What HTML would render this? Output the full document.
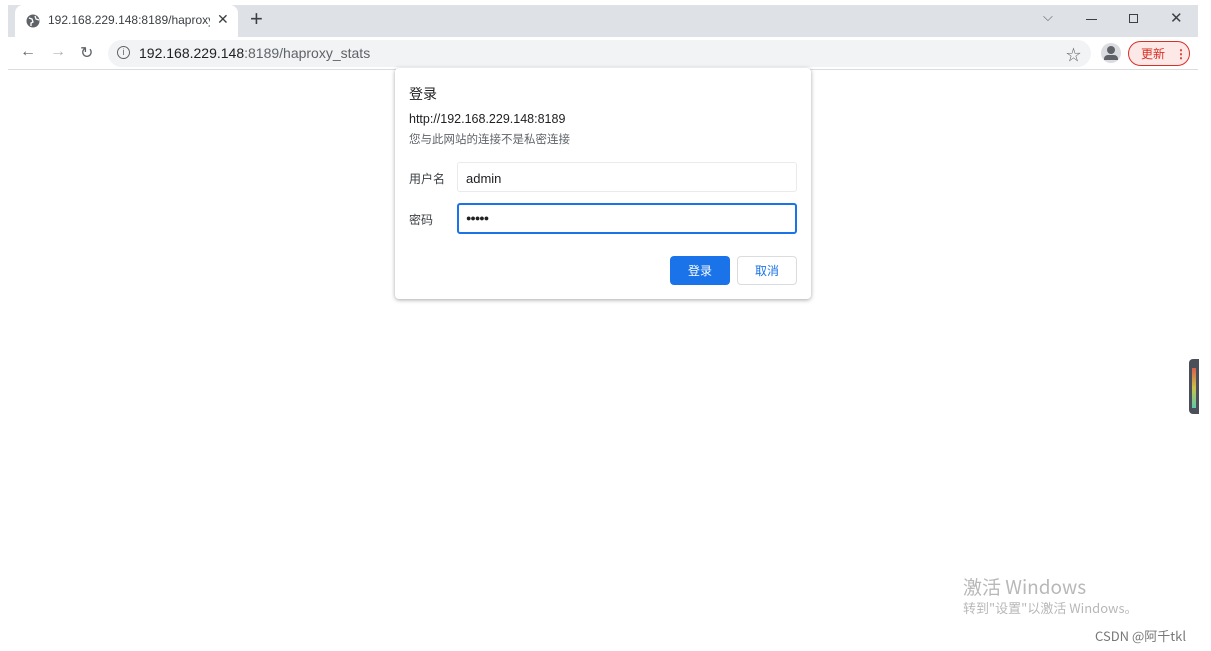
<!DOCTYPE html>
<html><head><meta charset="utf-8"><style>
*{margin:0;padding:0;box-sizing:border-box}
body{width:1211px;height:651px;background:#fff;position:relative;overflow:hidden;font-family:"Liberation Sans","Noto Sans CJK SC",sans-serif}
.a{position:absolute}
.cjk{font-family:"Noto Sans CJK SC","Liberation Sans",sans-serif}
</style></head><body>
<div class="a" style="left:8px;top:5px;width:1190px;height:32px;background:#dee1e6"></div>
<div class="a" style="left:15px;top:5px;width:223px;height:33px;background:#fff;border-radius:8px 8px 0 0"></div>
<svg class="a" style="left:26px;top:14px" width="14" height="14" viewBox="0 0 14 14"><circle cx="7" cy="7" r="6.5" fill="#5f6368"/><path d="M3 4l3 1 1 3-2 1v3M9 2l1 3 3 1" stroke="#fff" stroke-width="1.3" fill="none"/></svg>
<div class="a" style="left:48px;top:13px;font-size:12px;color:#3c4043;width:162px;overflow:hidden;white-space:nowrap">192.168.229.148:8189/haproxy</div>
<div class="a" style="left:217px;top:11px;font-size:14px;color:#3c4043">✕</div>
<div class="a" style="left:250px;top:6px;font-size:22px;color:#3c4043">+</div>
<div class="a" style="left:1043px;top:9px;font-size:13px;color:#5f6368">⌵</div>
<div class="a" style="left:1086px;top:19px;width:11px;height:1px;background:#3c4043"></div>
<div class="a" style="left:1129px;top:14px;width:9px;height:9px;border:1px solid #3c4043"></div>
<div class="a" style="left:1170px;top:9px;font-size:15px;color:#3c4043">✕</div>
<div class="a" style="left:8px;top:37px;width:1190px;height:33px;background:#fff;border-bottom:1px solid #dadce0"></div>
<div class="a" style="left:20px;top:43px;font-size:16px;color:#5f6368">←</div>
<div class="a" style="left:50px;top:43px;font-size:16px;color:#b0b3b8">→</div>
<div class="a" style="left:80px;top:43px;font-size:16px;color:#5f6368">↻</div>
<div class="a" style="left:108px;top:40px;width:983px;height:27px;background:#f1f3f4;border-radius:14px"></div>
<div class="a" style="left:117px;top:46px;width:13px;height:13px;border:1.3px solid #5f6368;border-radius:50%;font-size:9px;text-align:center;line-height:11px;color:#5f6368">i</div>
<div class="a" style="left:139px;top:45px;font-size:14px;color:#202124">192.168.229.148<span style="color:#5f6368">:8189/haproxy_stats</span></div>
<div class="a" style="left:1066px;top:44px;font-size:15px;color:#5f6368">☆</div>
<div class="a" style="left:1101px;top:43px;width:20px;height:20px;border-radius:50%;background:#dadce0"></div>
<div class="a" style="left:1107px;top:46px;width:8px;height:8px;border-radius:50%;background:#5f6368"></div>
<div class="a" style="left:1104px;top:55px;width:14px;height:5px;border-radius:4px 4px 0 0;background:#5f6368"></div>
<div class="a cjk" style="left:1128px;top:41px;width:62px;height:25px;border:1px solid #d93025;border-radius:13px;background:#fce8e6;color:#d93025;font-size:12px;line-height:23px;padding-left:12px">更新<span style="position:absolute;left:46px;top:0;font-weight:bold">⋮</span></div>

<div class="a" style="left:395px;top:68px;width:416px;height:231px;background:#fff;border-radius:4px;box-shadow:0 1px 4px rgba(0,0,0,.35)"></div>
<div class="a cjk" style="left:409px;top:84px;font-size:14px;color:#202124">登录</div>
<div class="a" style="left:409px;top:112px;font-size:12.5px;color:#202124">http://192.168.229.148:8189</div>
<div class="a cjk" style="left:409px;top:131px;font-size:11.5px;color:#5f6368">您与此网站的连接不是私密连接</div>
<div class="a cjk" style="left:409px;top:170px;font-size:12px;color:#3c4043">用户名</div>
<div class="a" style="left:457px;top:162px;width:340px;height:30px;border:1px solid #e8eaed;border-radius:3px;font-size:13px;padding:8px 0 0 8px;color:#202124">admin</div>
<div class="a cjk" style="left:409px;top:211px;font-size:12px;color:#3c4043">密码</div>
<div class="a" style="left:457px;top:203px;width:340px;height:31px;border:2px solid #1a73e8;border-radius:3px;font-size:9px;padding:8px 0 0 7px;color:#202124;letter-spacing:-1px">●●●●●</div>
<div class="a cjk" style="left:670px;top:256px;width:60px;height:29px;background:#1a73e8;border-radius:4px;color:#fff;font-size:12px;text-align:center;line-height:29px">登录</div>
<div class="a cjk" style="left:737px;top:256px;width:60px;height:29px;border:1px solid #dadce0;border-radius:4px;color:#1a73e8;font-size:12px;text-align:center;line-height:27px">取消</div>

<div class="a" style="left:1189px;top:359px;width:10px;height:55px;background:#4a4f5a;border-radius:4px 0 0 4px"></div>
<div class="a" style="left:1192px;top:368px;width:4px;height:40px;background:linear-gradient(#d9614b,#c9c24b,#5cc9a8)"></div>
<div class="a cjk" style="left:963px;top:573px;font-size:19px;color:#b8b8b8">激活 Windows</div>
<div class="a cjk" style="left:963px;top:598px;font-size:13px;color:#b8b8b8">转到"设置"以激活 Windows。</div>
<div class="a cjk" style="left:1095px;top:626px;font-size:13px;color:#777">CSDN @阿千tkl</div>
</body></html>
